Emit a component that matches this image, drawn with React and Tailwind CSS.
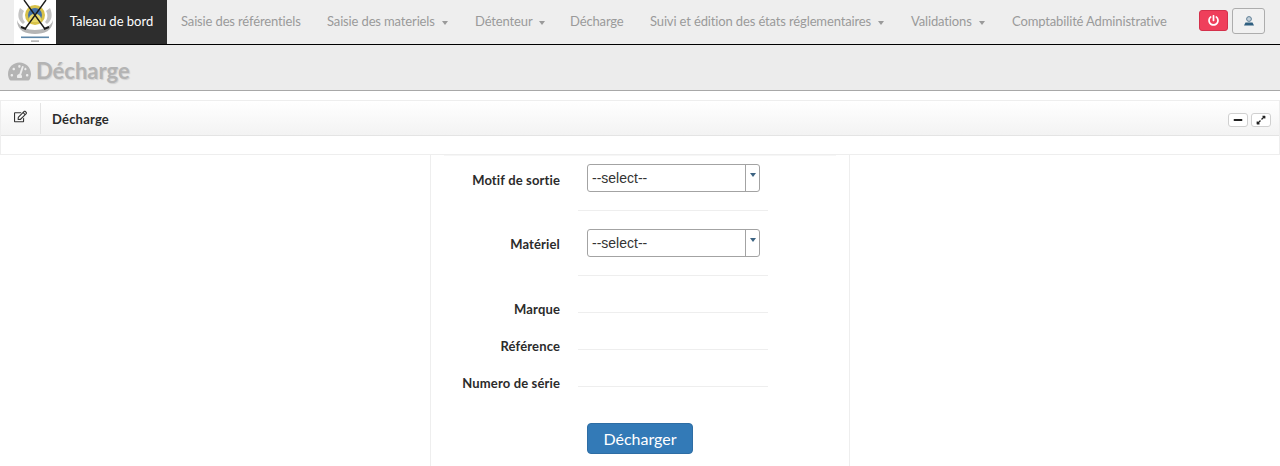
import React from 'react';
import { FaTachometerAlt, FaRegEdit, FaPowerOff, FaMinus, FaExpandAlt } from 'react-icons/fa';

function Logo() {
    return (
        <div className="w-[42px] h-[44px] bg-white shrink-0 overflow-hidden">
            <svg viewBox="0 0 42 44" width="42" height="44">
                <path d="M3 20 C3 31 12 34 21 34 C30 34 39 31 39 20 C37 27 28 30 21 30 C14 30 5 27 3 20Z" fill="#b5b5b5" />
                <path d="M6 8 C3 15 4 20 9 24 L11 22 C8 19 8 14 10 11Z" fill="#c4c4c4" />
                <path d="M36 8 C39 15 38 20 33 24 L31 22 C34 19 34 14 32 11Z" fill="#c4c4c4" />
                <circle cx="21" cy="15" r="10" fill="#d8c24a" />
                <circle cx="21" cy="15" r="7" fill="#3f6fa8" />
                <path d="M15 18 C17 12 25 12 27 18 L27 22 L15 22Z" fill="#e8d96a" />
                <path d="M10 0 L31 29 M32 0 L11 29" stroke="#1c1c1c" strokeWidth="1.4" />
                <path d="M7 27 L12 29 M35 27 L30 29" stroke="#1c1c1c" strokeWidth="2" />
                <rect x="7" y="36.5" width="28" height="1.6" fill="#5d86a8" />
                <rect x="17" y="40.5" width="8" height="1.2" fill="#9a9a9a" />
            </svg>
        </div>
    );
}

function NavItem({ label, caret, width }) {
    return (
        <a className={`${width} shrink-0 pl-[14px] h-[44px] flex items-center text-[#9a9a9a] text-[13px] tracking-[-0.14px] whitespace-nowrap`}>
            {label}
            {caret && <span className="ml-[7px] mt-[2px] border-x-[3.5px] border-x-transparent border-t-[4px] border-t-[#9a9a9a]"></span>}
        </a>
    );
}

function Combo() {
    return (
        <div className="ml-[9px] w-[173px] h-[28px] border border-[#a3a3a3] rounded-[3px] flex bg-white">
            <div className="flex-1 pl-[4px] text-[14px] leading-[26px] text-[#333] font-['Liberation_Sans',sans-serif]">--select--</div>
            <div className="w-[14px] border-l border-[#a3a3a3] flex justify-center pt-[8px]">
                <span className="h-0 border-x-[3.5px] border-x-transparent border-t-[4px] border-t-[#3c6382]"></span>
            </div>
        </div>
    );
}

function Label({ children, className }) {
    return <div className={`w-[129px] text-right font-bold text-[13px] tracking-[0.14px] text-[#2b2b2b] whitespace-nowrap ${className || ''}`}>{children}</div>;
}

function LineRow({ label }) {
    return (
        <div className="flex items-end h-[37px]">
            <Label className="leading-[18px] mb-[-6px] relative top-[-1px]">{label}</Label>
            <div className="ml-[18px] w-[190px] border-b border-[#eeeeee]"></div>
        </div>
    );
}

export default function App() {
    return (
        <div className="h-[466px] overflow-hidden bg-white font-['Lato',sans-serif]">
            <nav className="h-[45px] bg-[#eeeeee] border-b border-black flex pl-[14px]">
                <Logo />
                <a className="w-[111px] shrink-0 h-[44px] bg-[#2d2d2d] text-white text-[13px] flex items-center justify-center whitespace-nowrap">Taleau de bord</a>
                <NavItem label="Saisie des référentiels" width="w-[146px]" />
                <NavItem label="Saisie des materiels" caret width="w-[148px]" />
                <NavItem label="Détenteur" caret width="w-[95px]" />
                <NavItem label="Décharge" width="w-[80px]" />
                <NavItem label="Suivi et édition des états réglementaires" caret width="w-[261px]" />
                <NavItem label="Validations" caret width="w-[101px]" />
                <NavItem label="Comptabilité Administrative" width="w-[170px]" />
                <div className="ml-auto flex items-start pt-[10px] pr-[15px] gap-[4px]">
                    <button className="w-[29px] h-[21px] bg-[#ef3f5b] border border-[#d4304b] rounded-[3px] flex items-center justify-center">
                        <FaPowerOff size={11} color="white" />
                    </button>
                    <button className="w-[33px] h-[26px] mt-[-2px] bg-[#f1f1f1] border border-[#adadad] rounded-[3px] flex items-center justify-center">
                        <svg viewBox="0 0 12 12" width="12" height="12">
                            <circle cx="6" cy="4" r="2.4" fill="#c3d0da" stroke="#5f7f96" strokeWidth="1" />
                            <path d="M2.5 7.5 H9.5 L11 10.5 H1Z" fill="#2f5f80" />
                        </svg>
                    </button>
                </div>
            </nav>

            <header className="h-[46px] bg-[#ececec] border-b border-[#a8a8a8] flex items-center pl-[8px] gap-[5px] pt-[7px]">
                <FaTachometerAlt size={23} color="#b4b4b4" />
                <h1 className="text-[22px] font-bold text-[#b4b4b4] leading-none [text-shadow:1px_1px_1px_#d0d0d0]">Décharge</h1>
            </header>

            <section className="mt-[9px] border border-[#eeeeee]">
                <div className="h-[35px] flex items-center bg-gradient-to-b from-white to-[#f3f3f3] border-b border-[#e4e4e4] pt-[3px]">
                    <div className="w-[40px] h-[31px] mt-[-3px] border-r border-[#e4e4e4] flex justify-center pt-[7px]">
                        <FaRegEdit size={13} color="#333" />
                    </div>
                    <h2 className="ml-[11px] text-[13px] font-bold tracking-[0.2px] text-[#2b2b2b]">Décharge</h2>
                    <div className="ml-auto flex gap-[3px] pr-[8px]">
                        <button className="w-[20px] h-[14px] bg-white border border-[#d0d0d0] rounded-[3px] flex items-center justify-center">
                            <FaMinus size={10} color="#222" />
                        </button>
                        <button className="w-[20px] h-[14px] bg-white border border-[#d0d0d0] rounded-[3px] flex items-center justify-center">
                            <FaExpandAlt size={10} color="#222" />
                        </button>
                    </div>
                </div>
                <div className="h-[18px]"></div>
            </section>

            <main className="ml-[430px] w-[420px] h-[311px] border-x border-[#eeeeee]">
                <div className="mx-[13px] h-0 border-t border-[#f6f6f6]"></div>
                <div className="flex pt-[8px]">
                    <Label className="leading-[18px] mt-[7px]">Motif de sortie</Label>
                    <div className="ml-[18px] w-[190px] h-[47px] border-b border-[#eeeeee]"><Combo /></div>
                </div>
                <div className="flex pt-[18px]">
                    <Label className="leading-[18px] mt-[6px]">Matériel</Label>
                    <div className="ml-[18px] w-[190px] h-[47px] border-b border-[#eeeeee]"><Combo /></div>
                </div>
                <LineRow label="Marque" />
                <LineRow label="Référence" />
                <LineRow label="Numero de série" />
                <div className="pl-[156px] pt-[36px]">
                    <button className="w-[106px] h-[31px] bg-[#337ab7] border border-[#2e6da4] rounded-[4px] text-white text-[16px]">Décharger</button>
                </div>
            </main>
        </div>
    );
}
